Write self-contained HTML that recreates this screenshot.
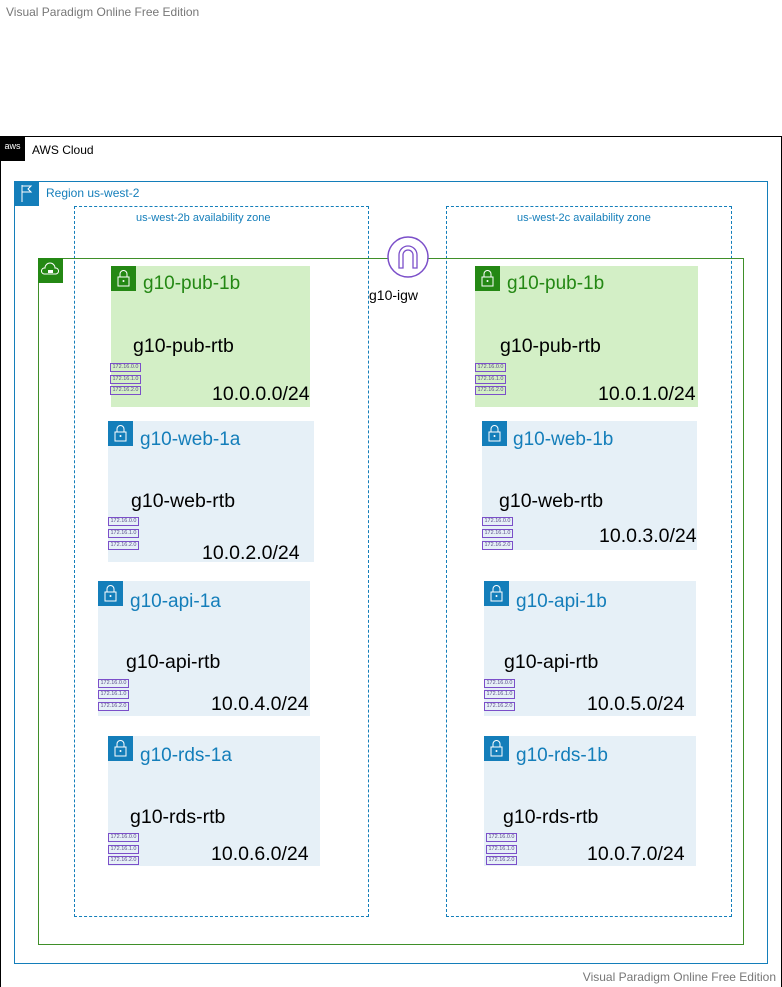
<!DOCTYPE html>
<html><head><meta charset="utf-8"><style>
*{margin:0;padding:0;box-sizing:border-box}
body{width:782px;height:987px;background:#fff;position:relative;overflow:hidden;font-family:"Liberation Sans",sans-serif}
.a{position:absolute}
.sub{position:absolute}
.g{background:#d3efc6}
.b{background:#e6f0f7}
.t{position:absolute;font-size:19px;white-space:nowrap}
.rt{position:absolute;font-size:19.5px;color:#000;white-space:nowrap}
.ci{position:absolute;font-size:19.5px;color:#000;white-space:nowrap}
.tag{position:absolute;width:31px;height:9px;border:1.5px solid #7b4fc9;font-size:5.5px;color:#5a4a8a;line-height:6px;text-align:center}
</style></head><body>
<div class="a" style="left:6px;top:5px;font-size:12px;color:#777">Visual Paradigm Online Free Edition</div>
<div class="a" style="right:6px;top:970px;font-size:12px;color:#777">Visual Paradigm Online Free Edition</div>

<div class="a" style="left:0;top:136px;width:782px;height:851px;border:1px solid #000;border-bottom:none"></div>
<div class="a" style="left:0;top:136px;width:25px;height:25px;background:#000;color:#fff;font-size:9px;text-align:center;line-height:20px">aws</div>
<div class="a" style="left:32px;top:143px;font-size:12px">AWS Cloud</div>

<div class="a" style="left:14px;top:181px;width:754px;height:783px;border:1px solid #147eba"></div>
<div class="a" style="left:14px;top:181px;width:25px;height:25px;background:#147eba">
<svg width="25" height="25"><path d="M8 4v17M8 5h9l-3 3 3 3H8" stroke="#fff" fill="none" stroke-width="1"/></svg></div>
<div class="a" style="left:46px;top:186px;font-size:12px;color:#147eba">Region us-west-2</div>

<div class="a" style="left:74px;top:206px;width:295px;height:711px;border:1px dashed #147eba"></div>
<div class="a" style="left:446px;top:206px;width:286px;height:711px;border:1px dashed #147eba"></div>
<div class="a" style="left:136px;top:212px;font-size:11px;color:#147eba">us-west-2b availability zone</div>
<div class="a" style="left:517px;top:212px;font-size:11px;color:#147eba">us-west-2c availability zone</div>

<div class="a" style="left:38px;top:258px;width:706px;height:687px;border:1px solid #3f8f29"></div>
<div class="a" style="left:38px;top:258px;width:25px;height:25px;background:#248814">
<svg width="25" height="25"><path d="M6 16a3 3 0 0 1 1-6 5 5 0 0 1 10 0 3 3 0 0 1 1 6z" stroke="#fff" fill="none"/><rect x="10" y="12" width="5" height="3" fill="#fff"/></svg></div>

<svg class="a" style="left:386px;top:235px" width="44" height="44"><circle cx="22" cy="22" r="20" fill="#fff" stroke="#7b4fc9" stroke-width="1.5"/><path d="M13 33V20a9 9 0 0 1 18 0v13h-4V20a5 5 0 0 0-10 0v13z" fill="none" stroke="#7b4fc9" stroke-width="1.3"/></svg>
<div class="a" style="left:369px;top:287px;font-size:14px">g10-igw</div>

<div class="sub g" style="left:111px;top:266px;width:199px;height:141px"></div>
<div class="sub g" style="left:475px;top:266px;width:223px;height:141px"></div>
<div class="sub b" style="left:108px;top:421px;width:206px;height:141px"></div>
<div class="sub b" style="left:482px;top:421px;width:215px;height:129px"></div>
<div class="sub b" style="left:98px;top:581px;width:212px;height:135px"></div>
<div class="sub b" style="left:484px;top:581px;width:212px;height:135px"></div>
<div class="sub b" style="left:108px;top:736px;width:212px;height:130px"></div>
<div class="sub b" style="left:484px;top:736px;width:212px;height:130px"></div>

<svg class="a" style="left:111px;top:266px" width="25" height="25"><rect width="25" height="25" fill="#248814"/><path d="M9 11V8a3.5 3.5 0 0 1 7 0v3M7 11h11v9H7z" fill="none" stroke="#fff"/><circle cx="12.5" cy="15" r="1" fill="#fff"/></svg>
<svg class="a" style="left:475px;top:266px" width="25" height="25"><rect width="25" height="25" fill="#248814"/><path d="M9 11V8a3.5 3.5 0 0 1 7 0v3M7 11h11v9H7z" fill="none" stroke="#fff"/><circle cx="12.5" cy="15" r="1" fill="#fff"/></svg>
<svg class="a" style="left:108px;top:421px" width="25" height="25"><rect width="25" height="25" fill="#147eba"/><path d="M9 11V8a3.5 3.5 0 0 1 7 0v3M7 11h11v9H7z" fill="none" stroke="#fff"/><circle cx="12.5" cy="15" r="1" fill="#fff"/></svg>
<svg class="a" style="left:482px;top:421px" width="25" height="25"><rect width="25" height="25" fill="#147eba"/><path d="M9 11V8a3.5 3.5 0 0 1 7 0v3M7 11h11v9H7z" fill="none" stroke="#fff"/><circle cx="12.5" cy="15" r="1" fill="#fff"/></svg>
<svg class="a" style="left:98px;top:581px" width="25" height="25"><rect width="25" height="25" fill="#147eba"/><path d="M9 11V8a3.5 3.5 0 0 1 7 0v3M7 11h11v9H7z" fill="none" stroke="#fff"/><circle cx="12.5" cy="15" r="1" fill="#fff"/></svg>
<svg class="a" style="left:484px;top:581px" width="25" height="25"><rect width="25" height="25" fill="#147eba"/><path d="M9 11V8a3.5 3.5 0 0 1 7 0v3M7 11h11v9H7z" fill="none" stroke="#fff"/><circle cx="12.5" cy="15" r="1" fill="#fff"/></svg>
<svg class="a" style="left:108px;top:736px" width="25" height="25"><rect width="25" height="25" fill="#147eba"/><path d="M9 11V8a3.5 3.5 0 0 1 7 0v3M7 11h11v9H7z" fill="none" stroke="#fff"/><circle cx="12.5" cy="15" r="1" fill="#fff"/></svg>
<svg class="a" style="left:484px;top:736px" width="25" height="25"><rect width="25" height="25" fill="#147eba"/><path d="M9 11V8a3.5 3.5 0 0 1 7 0v3M7 11h11v9H7z" fill="none" stroke="#fff"/><circle cx="12.5" cy="15" r="1" fill="#fff"/></svg>

<div class="t" style="left:143px;top:273px;color:#248814">g10-pub-1b</div>
<div class="t" style="left:507px;top:273px;color:#248814">g10-pub-1b</div>
<div class="t" style="left:140px;top:429px;color:#147eba">g10-web-1a</div>
<div class="t" style="left:513px;top:429px;color:#147eba">g10-web-1b</div>
<div class="t" style="left:130px;top:591px;color:#147eba">g10-api-1a</div>
<div class="t" style="left:516px;top:591px;color:#147eba">g10-api-1b</div>
<div class="t" style="left:140px;top:745px;color:#147eba">g10-rds-1a</div>
<div class="t" style="left:516px;top:745px;color:#147eba">g10-rds-1b</div>

<div class="rt" style="left:133px;top:335px">g10-pub-rtb</div>
<div class="rt" style="left:500px;top:335px">g10-pub-rtb</div>
<div class="rt" style="left:131px;top:490px">g10-web-rtb</div>
<div class="rt" style="left:499px;top:490px">g10-web-rtb</div>
<div class="rt" style="left:126px;top:651px">g10-api-rtb</div>
<div class="rt" style="left:504px;top:651px">g10-api-rtb</div>
<div class="rt" style="left:130px;top:806px">g10-rds-rtb</div>
<div class="rt" style="left:503px;top:806px">g10-rds-rtb</div>

<div class="ci" style="left:212px;top:383px">10.0.0.0/24</div>
<div class="ci" style="left:598px;top:383px">10.0.1.0/24</div>
<div class="ci" style="left:202px;top:542px">10.0.2.0/24</div>
<div class="ci" style="left:599px;top:525px">10.0.3.0/24</div>
<div class="ci" style="left:211px;top:693px">10.0.4.0/24</div>
<div class="ci" style="left:587px;top:693px">10.0.5.0/24</div>
<div class="ci" style="left:211px;top:843px">10.0.6.0/24</div>
<div class="ci" style="left:587px;top:843px">10.0.7.0/24</div>

<div class="tag" style="left:110px;top:363px">172.16.0.0</div><div class="tag" style="left:110px;top:375px">172.16.1.0</div><div class="tag" style="left:110px;top:386px">172.16.2.0</div>
<div class="tag" style="left:475px;top:363px">172.16.0.0</div><div class="tag" style="left:475px;top:375px">172.16.1.0</div><div class="tag" style="left:475px;top:386px">172.16.2.0</div>
<div class="tag" style="left:108px;top:517px">172.16.0.0</div><div class="tag" style="left:108px;top:529px">172.16.1.0</div><div class="tag" style="left:108px;top:541px">172.16.2.0</div>
<div class="tag" style="left:482px;top:517px">172.16.0.0</div><div class="tag" style="left:482px;top:529px">172.16.1.0</div><div class="tag" style="left:482px;top:541px">172.16.2.0</div>
<div class="tag" style="left:98px;top:679px">172.16.0.0</div><div class="tag" style="left:98px;top:690px">172.16.1.0</div><div class="tag" style="left:98px;top:702px">172.16.2.0</div>
<div class="tag" style="left:484px;top:679px">172.16.0.0</div><div class="tag" style="left:484px;top:690px">172.16.1.0</div><div class="tag" style="left:484px;top:702px">172.16.2.0</div>
<div class="tag" style="left:108px;top:833px">172.16.0.0</div><div class="tag" style="left:108px;top:845px">172.16.1.0</div><div class="tag" style="left:108px;top:856px">172.16.2.0</div>
<div class="tag" style="left:486px;top:833px">172.16.0.0</div><div class="tag" style="left:486px;top:845px">172.16.1.0</div><div class="tag" style="left:486px;top:856px">172.16.2.0</div>
</body></html>
